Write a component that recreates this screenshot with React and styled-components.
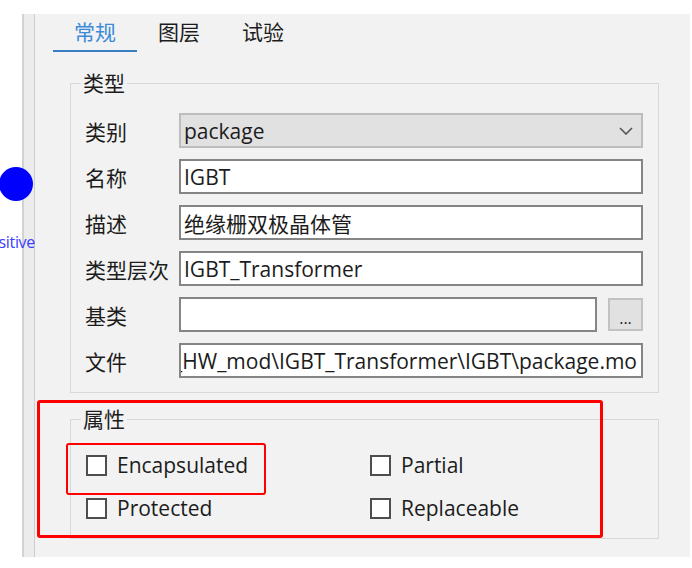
import React from 'react'
import styled, { createGlobalStyle } from 'styled-components'

const GlobalStyle = createGlobalStyle`
  body {
    margin: 0;
    background: #ffffff;
    font-family: "Open Sans", "Noto Sans CJK SC", sans-serif;
  }
`;

const Screen = styled.div`
  position: relative;
  width: 692px;
  height: 568px;
  display: flex;
  overflow: hidden;
`;

const Canvas = styled.div`
  position: relative;
  width: 22px;
  flex-shrink: 0;
  z-index: 2;
`;

const Node = styled.div`
  position: absolute;
  left: -1px;
  top: 167px;
  width: 34px;
  height: 34px;
  border-radius: 50%;
  background: #0000ff;
`;

const PortLabel = styled.div`
  position: absolute;
  right: -13px;
  top: 231px;
  font-family: "Open Sans", sans-serif;
  font-size: 16px;
  letter-spacing: -0.3px;
  color: #3c3cff;
  white-space: nowrap;
`;

const Splitter = styled.div`
  width: 13px;
  box-sizing: border-box;
  margin-top: 14px;
  height: 543px;
  background: #ececec;
  border-left: 2px solid #d2d2d2;
  border-right: 1px solid #cdcdcd;
`;

const Panel = styled.div`
  width: 655px;
  margin-top: 14px;
  height: 543px;
  box-sizing: border-box;
  background: #f2f2f2;
  padding: 0 31px 0 35px;
`;

const TabBar = styled.div`
  display: flex;
  margin-left: -17px;
`;

const Tab = styled.div`
  height: 38px;
  box-sizing: border-box;
  padding: 0 21px;
  line-height: 37px;
  font-size: 21px;
  color: ${p => (p.active ? '#3d8bd6' : '#1c1c1c')};
  border-bottom: 2px solid ${p => (p.active ? '#3a7dc2' : 'transparent')};
`;

const Group = styled.fieldset`
  margin: ${p => p.gap}px 0 0;
  padding: 18px 15px 14px 14px;
  border: 1px solid #d8d8d8;
  min-width: 0;
`;

const Legend = styled.legend`
  margin-left: -4px;
  padding: 0 2px;
  font-size: 21px;
  line-height: 24px;
  color: #1c1c1c;
`;

const Form = styled.div`
  display: grid;
  grid-template-columns: 94px 1fr;
  grid-auto-rows: 35px;
  row-gap: 11px;
  align-items: center;
`;

const Label = styled.div`
  font-size: 21px;
  color: #1c1c1c;
  white-space: nowrap;
`;

const Field = styled.div`
  height: 35px;
  box-sizing: border-box;
  display: flex;
  align-items: center;
  justify-content: ${p => (p.alignEnd ? 'flex-end' : 'flex-start')};
  padding: 0 4px 0 3px;
  overflow: hidden;
  white-space: nowrap;
  background: #ffffff;
  border: 2px solid #858585;
  font-size: 21px;
  color: #1c1c1c;
`;

const Combo = styled(Field)`
  background: #e1e1e1;
  border-color: #bdbdbd;
  justify-content: space-between;
  padding-right: 8px;
`;

const Browse = styled.div`
  display: flex;
  gap: 11px;
  align-items: center;
`;

const BrowseButton = styled.div`
  width: 35px;
  height: 33px;
  box-sizing: border-box;
  flex-shrink: 0;
  background: #e1e1e1;
  border: 2px solid #c2c2c2;
  display: flex;
  align-items: flex-end;
  justify-content: center;
  font-size: 16px;
  line-height: 22px;
  color: #1c1c1c;
`;

const Checks = styled.div`
  display: grid;
  grid-template-columns: 284px 1fr;
  grid-auto-rows: 32px;
  row-gap: 11px;
  padding-left: 1px;
`;

const Check = styled.label`
  display: flex;
  align-items: center;
  gap: 10px;
  font-size: 21px;
  color: #1c1c1c;
`;

const Box = styled.span`
  width: 21px;
  height: 21px;
  box-sizing: border-box;
  background: #ffffff;
  border: 2px solid #4e4e4e;
`;

const Mark = styled.div`
  position: absolute;
  z-index: 3;
  box-sizing: border-box;
  left: ${p => p.x}px;
  top: ${p => p.y}px;
  width: ${p => p.w}px;
  height: ${p => p.h}px;
  border: ${p => p.weight}px solid #ff0000;
  border-radius: 3px;
`;

const Chevron = () => (
  <svg width="14" height="8" viewBox="0 0 14 8">
    <path d="M1 1 L7 7 L13 1" fill="none" stroke="#555" strokeWidth="1.6" />
  </svg>
);

export default function App() {
  return (
    <>
      <GlobalStyle />
      <Screen>
        <Canvas>
          <Node />
          <PortLabel>Positive</PortLabel>
        </Canvas>
        <Splitter />
        <Panel>
          <TabBar>
            <Tab active>常规</Tab>
            <Tab>图层</Tab>
            <Tab>试验</Tab>
          </TabBar>

          <Group gap={19}>
            <Legend>类型</Legend>
            <Form>
              <Label>类别</Label>
              <Combo>
                <span>package</span>
                <Chevron />
              </Combo>
              <Label>名称</Label>
              <Field>IGBT</Field>
              <Label>描述</Label>
              <Field>绝缘栅双极晶体管</Field>
              <Label>类型层次</Label>
              <Field>IGBT_Transformer</Field>
              <Label>基类</Label>
              <Browse>
                <Field style={{ flex: 1 }} />
                <BrowseButton>...</BrowseButton>
              </Browse>
              <Label>文件</Label>
              <Field alignEnd>D:\Modelica\IGBT_HW_mod\IGBT_Transformer\IGBT\package.mo</Field>
            </Form>
          </Group>

          <Group gap={14}>
            <Legend>属性</Legend>
            <Checks>
              <Check><Box />Encapsulated</Check>
              <Check><Box />Partial</Check>
              <Check><Box />Protected</Check>
              <Check><Box />Replaceable</Check>
            </Checks>
          </Group>
        </Panel>

        <Mark x={37} y={400} w={566} h={138} weight={3} />
        <Mark x={66} y={443} w={200} h={52} weight={2} />
      </Screen>
    </>
  );
}
